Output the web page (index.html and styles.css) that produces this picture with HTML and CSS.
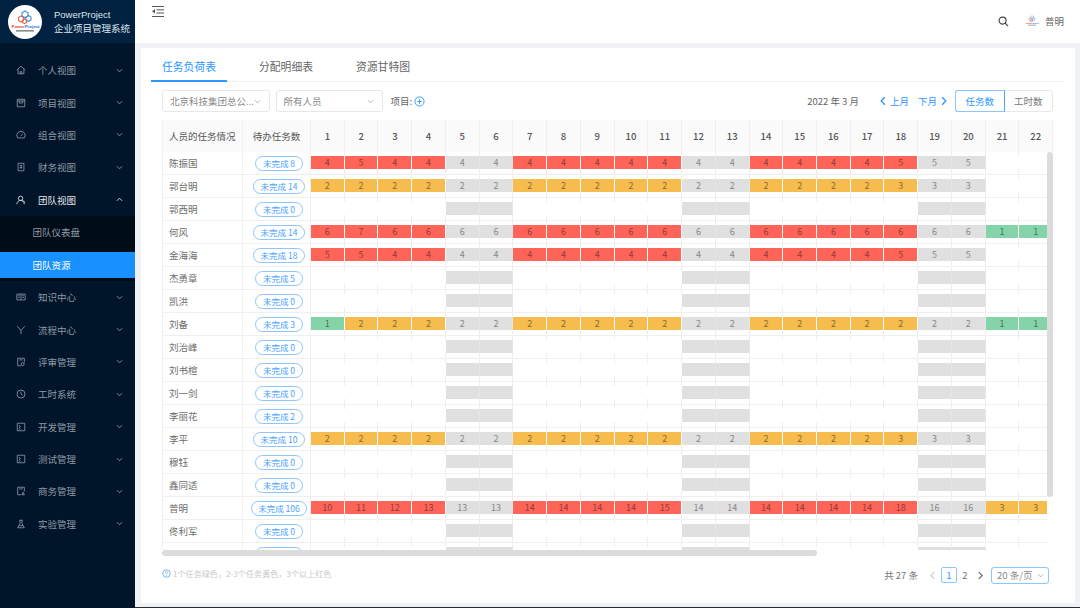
FILE: index.html
```html
<!DOCTYPE html>
<html lang="en">

<head>
  <meta charset="UTF-8" />
  <meta name="viewport" content="width=device-width, initial-scale=1.0" />
  <title>PowerProject</title>
  <link rel="stylesheet" href="styles.css">
</head>

<body>
  <svg class="defs" width="0" height="0">
    <symbol id="down" viewBox="0 0 8 8"><path d="M1 2.5 4 5.5 7 2.5" /></symbol>
    <symbol id="logo" viewBox="0 0 34 34">
      <circle class="logo-bg" cx="17" cy="17" r="17" />
      <path class="hex-blue" d="M17 6l3 1.700v3.400l-3 1.700-3-1.700V7.700z" />
      <path class="hex-blue" d="M20.500 10.500l2.500 1.500v3l-2.500 1.500-2.500-1.500v-3z" />
      <path class="hex-red" d="M13 11l2.500 1.500v3L13 17l-2.500-1.500v-3z" />
      <path class="hex-red" d="M16.500 14l2 1.200v2.300l-2 1.200-2-1.200v-2.300z" />
      <text x="3.500" y="23" class="logo-word"><tspan fill="#e8452c">Power</tspan><tspan fill="#2f6fd0">Project</tspan></text>
      <rect x="8" y="25" width="18" height="1.600" fill="#8a8a8a" />
    </symbol>
  </svg>

  <div class="app">
    <aside class="sidebar">
      <div class="brand">
        <svg class="brand-logo"><use href="#logo" /></svg>
        <div class="brand-text">
          <div>PowerProject</div>
          <div>企业项目管理系统</div>
        </div>
      </div>

      <nav class="menu">
        <div class="menu-item">
          <svg class="icon" viewBox="0 0 12 12"><path d="M1 6 6 1.500 11 6M2.500 5v5.500h7V5M5 10.500V8h2v2.500" /></svg>
          <span>个人视图</span>
          <svg class="arrow"><use href="#down" /></svg>
        </div>
        <div class="menu-item">
          <svg class="icon" viewBox="0 0 12 12"><path d="M1.500 1.500h9v9h-9zM1.500 3.500h9M4 3.500V6h4V3.500" /></svg>
          <span>项目视图</span>
          <svg class="arrow"><use href="#down" /></svg>
        </div>
        <div class="menu-item">
          <svg class="icon" viewBox="0 0 12 12"><path d="M2 9.500a5 5 0 1 1 8 0zM6 7l2-2.500" /></svg>
          <span>组合视图</span>
          <svg class="arrow"><use href="#down" /></svg>
        </div>
        <div class="menu-item">
          <svg class="icon" viewBox="0 0 12 12"><path d="M2.500 1.500h7v9h-7zM4.500 4h3M6 4v4.500M4.500 6.500h3" /></svg>
          <span>财务视图</span>
          <svg class="arrow"><use href="#down" /></svg>
        </div>
        <div class="menu-item open">
          <svg class="icon" viewBox="0 0 12 12"><circle cx="5.500" cy="4" r="2.600" /><path d="M1 11c.4-3 2-4.400 4.500-4.400S9.600 8 10 11M7.500 6l3.500 3" /></svg>
          <span>团队视图</span>
          <svg class="arrow up"><use href="#down" /></svg>
        </div>
        <div class="submenu">
          <div class="sub-item">团队仪表盘</div>
          <div class="sub-item active">团队资源</div>
        </div>
        <div class="menu-item">
          <svg class="icon" viewBox="0 0 12 12"><path d="M1 2.500h10v7H1zM6 2.500v7M2.500 4.500h2M2.500 6.500h2M7.500 4.500h2M7.500 6.500h2" /></svg>
          <span>知识中心</span>
          <svg class="arrow"><use href="#down" /></svg>
        </div>
        <div class="menu-item">
          <svg class="icon" viewBox="0 0 12 12"><path d="M1.500 1.500 6 6.500l4.500-5M6 6.500v4.500" /></svg>
          <span>流程中心</span>
          <svg class="arrow"><use href="#down" /></svg>
        </div>
        <div class="menu-item">
          <svg class="icon" viewBox="0 0 12 12"><path d="M6 10.500H2v-9h8v5M4 3.500h4" /><circle cx="8" cy="8.500" r="1.800" /></svg>
          <span>评审管理</span>
          <svg class="arrow"><use href="#down" /></svg>
        </div>
        <div class="menu-item">
          <svg class="icon" viewBox="0 0 12 12"><circle cx="6" cy="6" r="4.800" /><path d="M6 3v3.200l2 1.300" /></svg>
          <span>工时系统</span>
          <svg class="arrow"><use href="#down" /></svg>
        </div>
        <div class="menu-item">
          <svg class="icon" viewBox="0 0 12 12"><path d="M1.500 1.500h9v9h-9zM3.500 4l2 1.500-2 1.500M3.500 8.500h2" /></svg>
          <span>开发管理</span>
          <svg class="arrow"><use href="#down" /></svg>
        </div>
        <div class="menu-item">
          <svg class="icon" viewBox="0 0 12 12"><path d="M1.500 1.500h9v9h-9zM3.500 4l2 1.500-2 1.500M3.500 8.500h2" /></svg>
          <span>测试管理</span>
          <svg class="arrow"><use href="#down" /></svg>
        </div>
        <div class="menu-item">
          <svg class="icon" viewBox="0 0 12 12"><path d="M6 10.500H2v-9h8v5M4 3.500h4M7 10.500l1.500-3 1.500 3z" /></svg>
          <span>商务管理</span>
          <svg class="arrow"><use href="#down" /></svg>
        </div>
        <div class="menu-item">
          <svg class="icon" viewBox="0 0 12 12"><path d="M4 1.500h4M4.800 1.500v4L2 10.500h8L7.200 5.500v-4M3.500 8h5" /></svg>
          <span>实验管理</span>
          <svg class="arrow"><use href="#down" /></svg>
        </div>
      </nav>
    </aside>

    <div class="content">
      <header class="topbar">
        <svg class="fold" viewBox="0 0 12 11"><path d="M0 .5h12M4.500 3.800H12M4.500 7H12M0 10.500h12" /><path class="solid" d="M3 3v4.500L0 5.200z" /></svg>
        <div class="top-right">
          <svg class="search" viewBox="0 0 12 12"><circle cx="5" cy="5" r="3.800" /><path d="M7.800 7.800 11 11" /></svg>
          <svg class="avatar"><use href="#logo" /></svg>
          <span>普明</span>
        </div>
      </header>

      <section class="card">
        <div class="tabs">
          <div class="tab active">任务负荷表</div>
          <div class="tab">分配明细表</div>
          <div class="tab">资源甘特图</div>
        </div>

        <div class="filters">
          <div class="select wide"><span>北京科技集团总公...</span><svg class="arrow"><use href="#down" /></svg></div>
          <div class="select"><span>所有人员</span><svg class="arrow"><use href="#down" /></svg></div>
          <div class="project">项目:
            <svg class="plus" viewBox="0 0 12 12"><circle cx="6" cy="6" r="5" /><path d="M6 3.500v5M3.500 6h5" /></svg>
          </div>
          <div class="month">2022 年 3 月</div>
          <div class="month-link"><svg class="month-arrow left"><use href="#down" /></svg>上月</div>
          <div class="month-link last">下月<svg class="month-arrow right"><use href="#down" /></svg></div>
          <div class="segment">
            <div class="seg active">任务数</div>
            <div class="seg">工时数</div>
          </div>
        </div>

        <div class="table">
          <div class="row head" id="head"></div>
          <div class="table-body" id="rows"></div>
          <div class="scroll-y"></div>
          <div class="scroll-x"></div>
        </div>

        <div class="footer">
          <div class="legend">
            <svg class="help" viewBox="0 0 12 12"><circle cx="6" cy="6" r="5" /><path d="M4.500 4.700a1.500 1.500 0 1 1 2.300 1.300c-.6.400-.8.700-.8 1.300M6 8.600v.8" /></svg>
            1个任务绿色，2-3个任务黄色，3个以上红色
          </div>
          <div class="pager">
            <span class="total">共 27 条</span>
            <svg class="page-arrow off left"><use href="#down" /></svg>
            <span class="page current">1</span>
            <span class="page">2</span>
            <svg class="page-arrow right"><use href="#down" /></svg>
            <div class="page-size">20 条/页<svg class="arrow"><use href="#down" /></svg></div>
          </div>
        </div>
      </section>
    </div>
  </div>

  <script>
    // rest days are always grey, even with nothing assigned
    const restDays = [5, 6, 12, 13, 19, 20];

    const people = [
      ["陈振国", 8, "4 5 4 4 4 4 4 4 4 4 4 4 4 4 4 4 4 5 5 5"],
      ["郭台明", 14, "2 2 2 2 2 2 2 2 2 2 2 2 2 2 2 2 2 3 3 3"],
      ["郭西明", 0, ""],
      ["何风", 14, "6 7 6 6 6 6 6 6 6 6 6 6 6 6 6 6 6 6 6 6 1 1"],
      ["金海海", 18, "5 5 4 4 4 4 4 4 4 4 4 4 4 4 4 4 4 5 5 5"],
      ["杰勇章", 5, ""],
      ["凯洪", 0, ""],
      ["刘备", 3, "1 2 2 2 2 2 2 2 2 2 2 2 2 2 2 2 2 2 2 2 1 1"],
      ["刘治峰", 0, ""],
      ["刘书楦", 0, ""],
      ["刘一剑", 0, ""],
      ["李丽花", 2, ""],
      ["李平", 10, "2 2 2 2 2 2 2 2 2 2 2 2 2 2 2 2 2 3 3 3"],
      ["穆钰", 0, ""],
      ["鑫同适", 0, ""],
      ["普明", 106, "10 11 12 13 13 13 14 14 14 14 15 14 14 14 14 14 14 18 16 16 3 3"],
      ["佟利军", 0, ""],
      ["王小明", 0, ""]
    ];

    function makeCell(className, text) {
      const cell = document.createElement("div");
      cell.className = className;
      cell.textContent = text;
      return cell;
    }

    function barColor(day, value) {
      if (restDays.includes(day)) return "gray";
      if (!value) return "";
      if (value === 1) return "green";
      return value <= 3 ? "yellow" : "red";
    }

    const head = document.getElementById("head");
    head.appendChild(makeCell("name", "人员的任务情况"));
    head.appendChild(makeCell("todo", "待办任务数"));
    for (let day = 1; day <= 22; day++) {
      head.appendChild(makeCell("day", day));
    }

    const rowsBox = document.getElementById("rows");
    people.forEach(person => {
      const row = document.createElement("div");
      row.className = "row";
      row.appendChild(makeCell("name", person[0]));

      const todo = makeCell("todo", "");
      todo.appendChild(makeCell("pill", "未完成 " + person[1]));
      row.appendChild(todo);

      const values = person[2] ? person[2].split(" ").map(Number) : [];
      for (let day = 1; day <= 22; day++) {
        const value = values[day - 1];
        const cell = makeCell("day", "");
        cell.appendChild(makeCell("bar " + barColor(day, value), value || ""));
        row.appendChild(cell);
      }
      rowsBox.appendChild(row);
    });
  </script>
</body>

</html>
```

FILE: styles.css
```css
* {
  box-sizing: border-box;
}

html,
body {
  margin: 0;
  padding: 0;
  height: 608px;
  overflow: hidden;
}

body {
  font-family: "Noto Sans CJK SC", "Noto Sans", sans-serif;
  font-size: 9.5px;
  color: #666;
  background-color: #2a2d33;
}

svg {
  display: block;
  flex: none;
}

svg path,
svg circle {
  fill: none;
  stroke: currentColor;
}

.defs {
  position: absolute;
}

/* logo, used in the sidebar and as the avatar */
svg .logo-bg {
  fill: #fff;
  stroke: none;
}

svg .hex-blue {
  stroke: #3f8fe0;
  stroke-width: 1.100;
}

svg .hex-red {
  stroke: #e0694a;
  stroke-width: 1.100;
}

.logo-word {
  font-family: "Liberation Sans", sans-serif;
  font-size: 4.400px;
  font-weight: bold;
}

.app {
  display: flex;
  height: 607px;
}

/* sidebar */
.sidebar {
  width: 135px;
  flex: none;
  height: 608px;
  background-color: #001529;
  color: #8d99a6;
}

.brand {
  height: 43px;
  display: flex;
  align-items: center;
  padding-left: 8px;
  gap: 12px;
  background-color: #002140;
}

.brand-logo {
  width: 34px;
  height: 34px;
}

.brand-text {
  color: #dfe5eb;
  line-height: 13.500px;
  font-family: "Liberation Sans", "Noto Sans CJK SC", sans-serif;
}

.menu {
  padding-top: 11px;
}

.menu-item {
  height: 32.400px;
  display: flex;
  align-items: center;
  padding-left: 16px;
}

.menu-item .icon {
  width: 10px;
  height: 10px;
  margin-right: 12px;
  stroke-width: 1;
}

.menu-item span {
  flex: 1;
}

.menu-item .arrow {
  margin-right: 12px;
}

.arrow {
  width: 7px;
  height: 7px;
}

.arrow.up {
  transform: rotate(180deg);
}

.menu-item.open {
  color: #e4e8ec;
}

.submenu {
  background-color: #000c17;
  padding: 3px 0;
  display: flex;
  flex-direction: column;
  gap: 7px;
}

.sub-item {
  height: 26px;
  line-height: 26px;
  padding-left: 32.500px;
}

.sub-item.active {
  background-color: #1890ff;
  color: #fff;
}

/* top bar */
.content {
  flex: 1;
  min-width: 0;
  display: flex;
  flex-direction: column;
  background-color: #f0f2f5;
}

.topbar {
  height: 43px;
  flex: none;
  background-color: #fff;
  display: flex;
  justify-content: space-between;
  padding: 6px 16px 0 17px;
}

.fold {
  width: 12px;
  height: 11px;
  color: #555;
}

svg .solid {
  fill: #555;
  stroke: none;
}

.top-right {
  display: flex;
  align-items: center;
  height: 30px;
  color: #666;
}

.search {
  width: 11px;
  height: 11px;
  color: #444;
  stroke-width: 1.300;
  margin-right: 14.500px;
}

.avatar {
  width: 16px;
  height: 16px;
  margin-right: 5px;
}

/* card */
.card {
  height: 555px;
  margin: 5px 5px 0 6px;
  background-color: #fff;
  padding: 0 0 0 10px;
}

.tabs {
  width: 914px;
  height: 33.500px;
  border-bottom: 1px solid #f0f0f0;
  display: flex;
  gap: 21px;
  padding-top: 8px;
}

.tab {
  width: 76px;
  height: 25.500px;
  font-size: 10.800px;
  text-align: center;
  line-height: 20px;
  color: #666;
}

.tab.active {
  color: #2b97ff;
  border-bottom: 2px solid #2b97ff;
}

.filters {
  display: flex;
  align-items: center;
  width: 891px;
  height: 22px;
  margin: 8.500px 0 0 11px;
  font-size: 9.500px;
}

.select {
  width: 107.500px;
  height: 22px;
  border: 1px solid #e8e8e8;
  border-radius: 3px;
  margin-right: 6px;
  padding: 0 8px 0 7px;
  color: #8a8a8a;
  display: flex;
  align-items: center;
  justify-content: space-between;
  white-space: nowrap;
}

.select .arrow {
  color: #aaa;
}

.project {
  display: flex;
  align-items: center;
  gap: 2px;
  margin-left: 1.500px;
  color: #666;
}

.plus {
  width: 11px;
  height: 11px;
  color: #2b97ff;
}

.month {
  margin-left: auto;
  margin-right: 19px;
  color: #666;
}

.month-link {
  display: flex;
  align-items: center;
  gap: 2px;
  color: #2b97ff;
  margin-right: 9px;
}

.month-link.last {
  margin-right: 6px;
}

.month-arrow {
  width: 10px;
  height: 10px;
}

.month-arrow.left,
.page-arrow.left {
  transform: rotate(90deg);
}

.month-arrow.right,
.page-arrow.right {
  transform: rotate(-90deg);
}

.segment {
  display: flex;
  width: 98px;
  height: 22px;
  border: 1px solid #e8e8e8;
  border-radius: 3px;
  line-height: 20px;
  text-align: center;
}

.seg {
  flex: 1;
  color: #777;
}

.seg.active {
  margin: -1px 0 -1px -1px;
  border: 1px solid #8cc5ff;
  border-right-color: #4da3ff;
  border-radius: 3px 0 0 3px;
  color: #2b97ff;
}

/* table */
.table {
  position: relative;
  width: 891px;
  margin: 8px 0 0 11px;
}

.row {
  display: grid;
  grid-template-columns: 81px 68px repeat(22, 33.740px);
  height: 23px;
  border-bottom: 1px solid #f0f0f0;
}

.row.head {
  height: 32px;
  background-color: #fafafa;
  border-bottom: 0;
}

.head .name,
.head .todo,
.head .day {
  display: flex;
  align-items: center;
  color: #555;
}

.head .todo,
.head .day {
  justify-content: center;
  padding-left: 0;
}

.head .day {
  font-weight: 500;
}

.table-body {
  width: 885px;
  height: 398px;
  overflow: hidden;
}

.name {
  padding-left: 6px;
  line-height: 22px;
  color: #6e6e6e;
  border-left: 1px solid #f0f0f0;
  border-right: 1px solid #f0f0f0;
  white-space: nowrap;
}

.todo {
  display: flex;
  justify-content: center;
  align-items: center;
  padding-left: 5px;
  border-right: 1px solid #f0f0f0;
  white-space: nowrap;
}

.pill {
  height: 15px;
  line-height: 13px;
  padding: 0 6.500px;
  border: 1px solid #8cc5ff;
  border-radius: 8px;
  color: #4aa3ff;
  font-size: 8.500px;
}

.day {
  border-right: 1px solid #eee;
}

.bar {
  height: 13px;
  margin-top: 4px;
  margin-right: -1px;
  border-right: 1px solid #fff;
  font-size: 9px;
  line-height: 13px;
  text-align: center;
}

.bar.red {
  background-color: #ff6459;
  color: #8f3d36;
}

.bar.yellow {
  background-color: #f6bc4e;
  color: #8a6d2f;
}

.bar.green {
  background-color: #85d3a9;
  color: #47745c;
}

.bar.gray {
  background-color: #e0e0e0;
  color: #888;
  border-right-color: #e6e6e6;
}

.scroll-y {
  position: absolute;
  top: 32px;
  right: 0;
  width: 6px;
  height: 345px;
  border-radius: 3px;
  background-color: #dcdcdc;
}

.scroll-x {
  position: absolute;
  top: 430px;
  left: 0;
  width: 655px;
  height: 6px;
  border-radius: 3px;
  background-color: #dcdcdc;
}

/* footer */
.footer {
  display: flex;
  justify-content: space-between;
  align-items: center;
  width: 887px;
  margin: 16px 0 0 11px;
  height: 18px;
}

.legend {
  display: flex;
  align-items: center;
  gap: 2px;
  margin-top: -3px;
  font-size: 8.100px;
  color: #c8c8c8;
}

.help {
  width: 9px;
  height: 9px;
  color: #4aa3ff;
}

.pager {
  display: flex;
  align-items: center;
  color: #777;
}

.total {
  margin-right: 10px;
}

.page-arrow {
  width: 9px;
  height: 9px;
  color: #666;
}

.page-arrow.off {
  color: #ccc;
  margin-right: 4px;
}

.page {
  width: 16px;
  height: 16px;
  line-height: 14px;
  text-align: center;
  border: 1px solid transparent;
}

.page.current {
  border-color: #8cc5ff;
  border-radius: 2px;
  color: #2b97ff;
}

.page + .page {
  margin-right: 3px;
}

.page-size {
  display: flex;
  align-items: center;
  justify-content: space-between;
  width: 58px;
  height: 17px;
  margin-left: 6px;
  padding: 0 4px 0 5px;
  border: 1px solid #8cc5ff;
  border-radius: 3px;
  color: #8a8a8a;
}

.page-size .arrow {
  color: #aaa;
}
```
